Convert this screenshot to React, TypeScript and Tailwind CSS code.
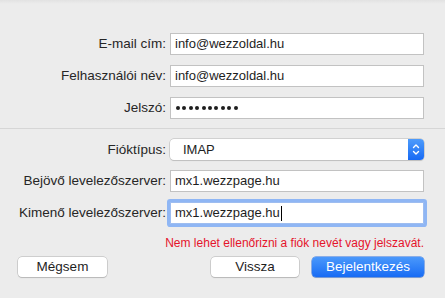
import React from "react";

const font = { fontFamily: '"Liberation Sans", Arial, sans-serif' };

function Row({ label, children }: { label: string; children: React.ReactNode }) {
  return (
    <div className="flex items-center">
      <div className="w-[166px] text-right text-[13.5px] text-[#262626] leading-none">{label}</div>
      <div className="ml-[4px] w-[254px]">{children}</div>
    </div>
  );
}

function TextField({ value, focused }: { value: string; focused?: boolean }) {
  return (
    <div
      className={
        "h-[22px] bg-white border flex items-center pl-[4px] text-[13px] text-[#1e1e1e] " +
        (focused
          ? "border-[#9ebdf0] shadow-[0_0_0_3px_#8fb6f4] rounded-[1px]"
          : "border-[#c2c2c2]")
      }
    >
      <span>{value}</span>
      {focused && <span className="ml-[1px] w-[1px] h-[15px] bg-black" />}
    </div>
  );
}

export default function App() {
  return (
    <div
      className="w-[445px] h-[298px] bg-[#ececec] bg-gradient-to-b from-[#e2e2e2] to-[#ececec] bg-[length:100%_4px] bg-no-repeat overflow-hidden"
      style={font}
    >
      <div className="pt-[33px] flex flex-col gap-[10px]">
        <Row label="E-mail cím:">
          <TextField value="info@wezzoldal.hu" />
        </Row>
        <Row label="Felhasználói név:">
          <TextField value="info@wezzoldal.hu" />
        </Row>
        <Row label="Jelszó:">
          <div className="h-[22px] bg-white border border-[#c2c2c2] flex items-center pl-[5px] gap-[2.4px]">
            {Array.from({ length: 10 }).map((_, i) => (
              <span key={i} className="w-[4px] h-[4px] rounded-full bg-[#1e1e1e]" />
            ))}
          </div>
        </Row>
      </div>

      <div className="mt-[9px] h-px bg-[#d6d6d6]" />

      <div className="pt-[10px] flex flex-col gap-[10px]">
        <Row label="Fióktípus:">
          <div className="h-[21px] bg-white rounded-[4px] shadow-[0_0_0_0.5px_#b5b5b5,0_1px_1px_rgba(0,0,0,0.15)] flex items-center justify-between">
            <span className="pl-[13px] text-[13px] text-[#1e1e1e]">IMAP</span>
            <div className="w-[16px] h-[21px] rounded-r-[4px] bg-gradient-to-b from-[#4d9bfb] to-[#1669f4] flex items-center justify-center">
              <svg width="8" height="13" viewBox="0 0 8 13" fill="none" stroke="white" strokeWidth="1.4" strokeLinecap="round" strokeLinejoin="round">
                <path d="M1.5 4.5 L4 2 L6.5 4.5" />
                <path d="M1.5 8.5 L4 11 L6.5 8.5" />
              </svg>
            </div>
          </div>
        </Row>
        <Row label="Bejövő levelezőszerver:">
          <TextField value="mx1.wezzpage.hu" />
        </Row>
        <Row label="Kimenő levelezőszerver:">
          <TextField value="mx1.wezzpage.hu" focused />
        </Row>
      </div>

      <div className="mt-[12px] w-[424px] text-right text-[12px] text-[#e5142b] leading-[14px]">
        Nem lehet ellenőrizni a fiók nevét vagy jelszavát.
      </div>

      <div className="mt-[7px] flex items-center pl-[18px] pr-[21px]">
        <button className="w-[89px] h-[20px] bg-white rounded-[4px] shadow-[0_0_0_0.5px_#b0b0b0,0_1px_1px_rgba(0,0,0,0.18)] text-[13.5px] text-[#1e1e1e] leading-none">
          Mégsem
        </button>
        <div className="flex-1" />
        <button className="w-[88px] h-[20px] bg-white rounded-[4px] shadow-[0_0_0_0.5px_#b0b0b0,0_1px_1px_rgba(0,0,0,0.18)] text-[13.5px] text-[#1e1e1e] leading-none">
          Vissza
        </button>
        <button className="ml-[13px] w-[112px] h-[20px] rounded-[4px] bg-gradient-to-b from-[#4a98fb] to-[#176bf4] shadow-[0_0_0_0.5px_#2b6fe0,0_1px_1px_rgba(0,0,0,0.18)] text-[13.5px] text-white leading-none">
          Bejelentkezés
        </button>
      </div>
    </div>
  );
}
